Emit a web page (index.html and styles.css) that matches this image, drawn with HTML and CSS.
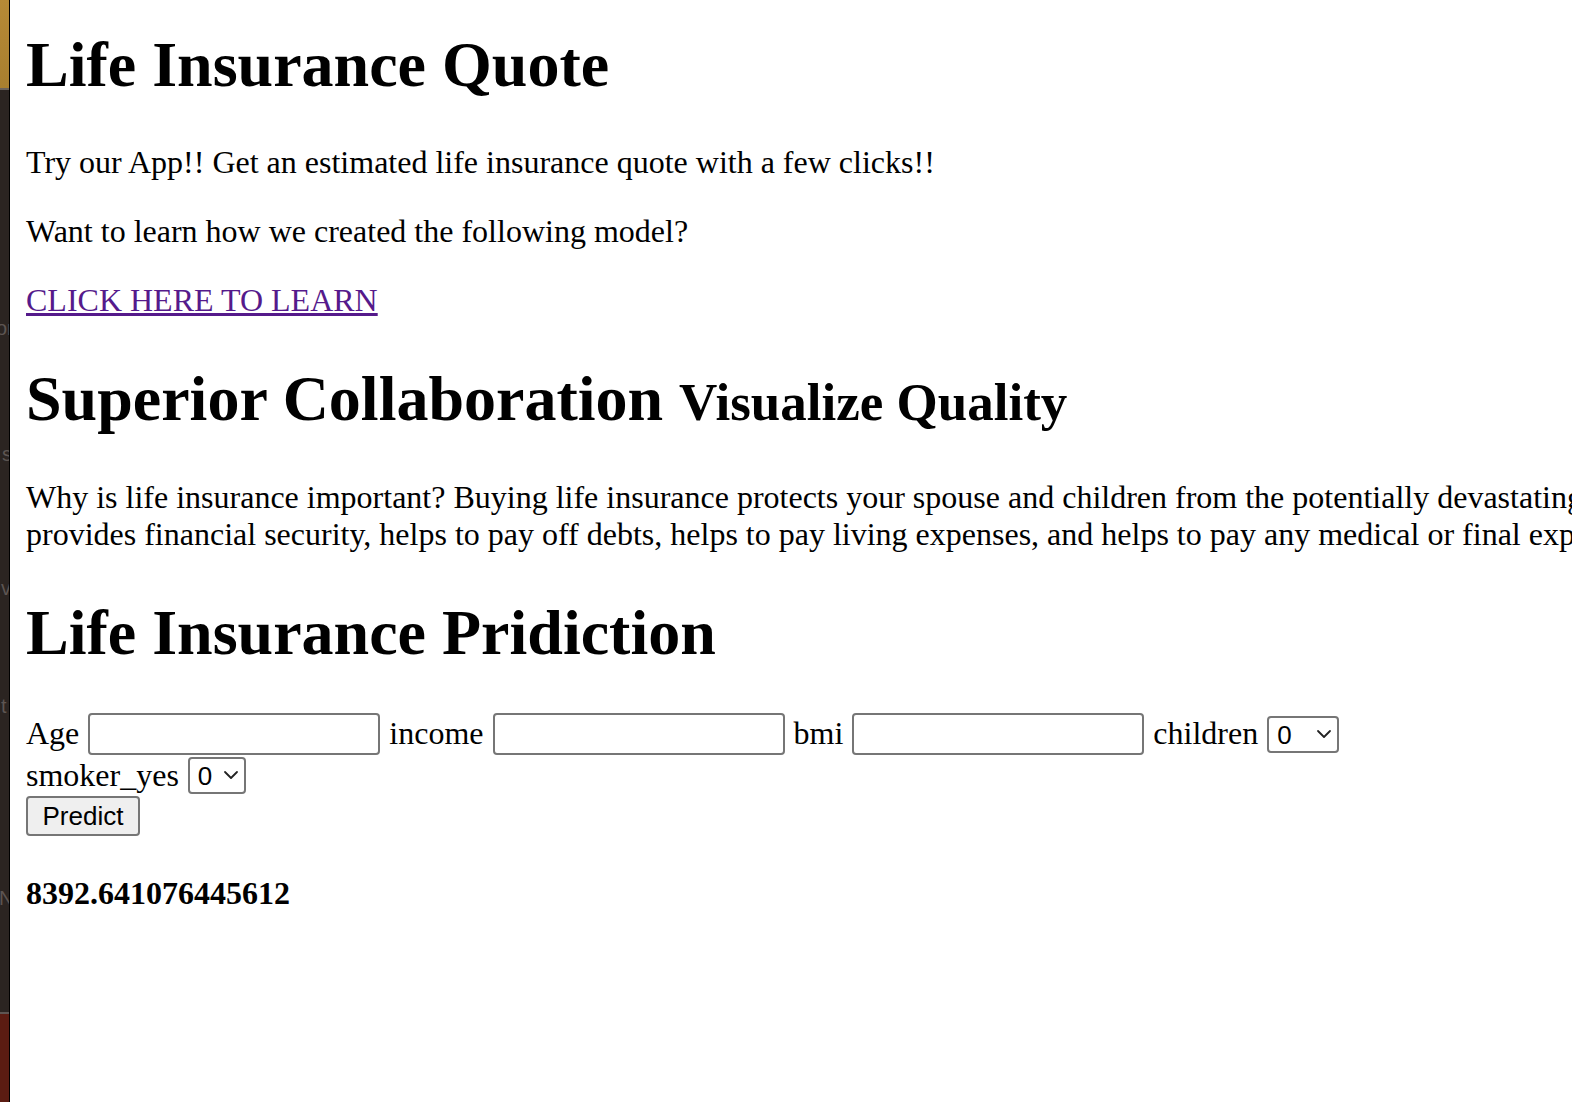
FILE: index.html
```html
<!DOCTYPE html>
<html>
<head>
<meta charset="utf-8">
<title>Life Insurance Quote</title>
<link rel="stylesheet" href="styles.css">
</head>
<body>
<div class="window">
  <div class="strip">
    <div class="strip-gold"></div>
    <div class="strip-dark">
      <span class="ghost g1">or</span>
      <span class="ghost g2">s</span>
      <span class="ghost g3">v</span>
      <span class="ghost g4">t</span>
      <span class="ghost g5">N</span>
    </div>
    <div class="strip-red"></div>
  </div>
  <div class="page">
    <h1 class="title first">Life Insurance Quote</h1>
    <p class="text">Try our App!! Get an estimated life insurance quote with a few clicks!!</p>
    <p class="text">Want to learn how we created the following model?</p>
    <p class="text"><a class="learn" href="#">CLICK HERE TO LEARN</a></p>
    <h1 class="title">Superior Collaboration <span class="sub">Visualize Quality</span></h1>
    <p class="text wide">Why is life insurance important? Buying life insurance protects your spouse and children from the potentially devastating financial loss of your income. Life insurance<br>provides financial security, helps to pay off debts, helps to pay living expenses, and helps to pay any medical or final expenses.</p>
    <h1 class="title">Life Insurance Pridiction</h1>
    <form class="form">
      <div class="row">
        <label class="lbl">Age</label>
        <input class="field" type="text">
        <label class="lbl">income</label>
        <input class="field" type="text">
        <label class="lbl">bmi</label>
        <input class="field" type="text">
        <label class="lbl">children</label>
        <span class="sel sel-wide"><select class="select"><option>0</option></select><svg class="chev" width="16" height="10" viewBox="0 0 16 10"><path d="M2 2 L8 8 L14 2" fill="none" stroke="#222" stroke-width="1.8" stroke-linecap="round" stroke-linejoin="round"/></svg></span>
      </div>
      <div class="row row2">
        <label class="lbl">smoker_yes</label>
        <span class="sel sel-narrow"><select class="select"><option>0</option></select><svg class="chev" width="16" height="10" viewBox="0 0 16 10"><path d="M2 2 L8 8 L14 2" fill="none" stroke="#222" stroke-width="1.8" stroke-linecap="round" stroke-linejoin="round"/></svg></span>
      </div>
      <div class="row">
        <button class="btn" type="button">Predict</button>
      </div>
    </form>
    <p class="result">8392.641076445612</p>
  </div>
</div>
</body>
</html>
```
FILE: styles.css
```css
html, body {
  margin: 0;
  padding: 0;
  height: 100%;
  overflow: hidden;
  background: #fff;
}
.window {
  display: flex;
  height: 1102px;
}
.strip {
  width: 9px;
  flex: none;
  border-right: 1px solid #000;
  display: flex;
  flex-direction: column;
}
.strip-gold {
  height: 88px;
  background: linear-gradient(180deg, #b68a36 0%, #a97f2f 100%);
  border-bottom: 2px solid #6b625c;
}
.strip-dark {
  flex: 1;
  background: #2b2421;
  position: relative;
  overflow: hidden;
  border-bottom: 2px solid #5e5552;
}
.strip-red {
  height: 88px;
  background: #5b1c12;
}
.ghost {
  position: absolute;
  font-family: "Liberation Sans", sans-serif;
  font-size: 20px;
  color: #5d5552;
  line-height: 1;
}
.g1 { top: 228px; left: -4px; }
.g2 { top: 354px; left: 2px; }
.g3 { top: 488px; left: 1px; }
.g4 { top: 606px; left: 1px; }
.g5 { top: 798px; left: -1px; }
.page {
  flex: 1;
  min-width: 0;
  padding: 0 0 0 16px;
  overflow: hidden;
  font-family: "Liberation Serif", "Times New Roman", serif;
  font-size: 32px;
  color: #000;
}
.title {
  font-size: 64px;
  font-weight: bold;
  margin: 42.88px 0;
}
.title.first {
  margin-top: 27.6px;
}
.sub {
  font-size: 53px;
}
.text {
  margin: 32px 0;
}
.wide {
  white-space: nowrap;
}
.learn {
  color: #551a8b;
  text-decoration: underline;
}
.form {
  margin: 0;
}
.row {
  display: flex;
  align-items: center;
  gap: 0;
}
.row2 {
  margin-top: 1px;
}
.lbl {
  margin-right: 9px;
}
.field {
  width: 292px;
  height: 42px;
  box-sizing: border-box;
  border: 2px solid #767676;
  border-radius: 4px;
  margin: 0 9px 0 0;
  padding: 2px 4px;
  font-size: 26px;
  background: #fff;
}
.sel {
  position: relative;
  display: inline-block;
}
.select {
  appearance: none;
  -webkit-appearance: none;
  height: 37px;
  box-sizing: border-box;
  border: 2px solid #767676;
  border-radius: 4px;
  background: #fff;
  font-family: "Liberation Sans", Arial, sans-serif;
  font-size: 26px;
  color: #000;
  padding: 0 0 0 8px;
  margin: 0;
}
.sel-wide .select { width: 72px; }
.sel-narrow .select { width: 58px; }
.chev {
  position: absolute;
  top: 14px;
  right: 7px;
  pointer-events: none;
}
.btn {
  margin-top: 2px;
  width: 114px;
  height: 40px;
  box-sizing: border-box;
  border: 2px solid #767676;
  border-radius: 4px;
  background: #efefef;
  font-family: "Liberation Sans", Arial, sans-serif;
  font-size: 26px;
  color: #000;
  padding: 0;
}
.result {
  font-weight: bold;
  margin: 39px 0 0 0;
}
```
